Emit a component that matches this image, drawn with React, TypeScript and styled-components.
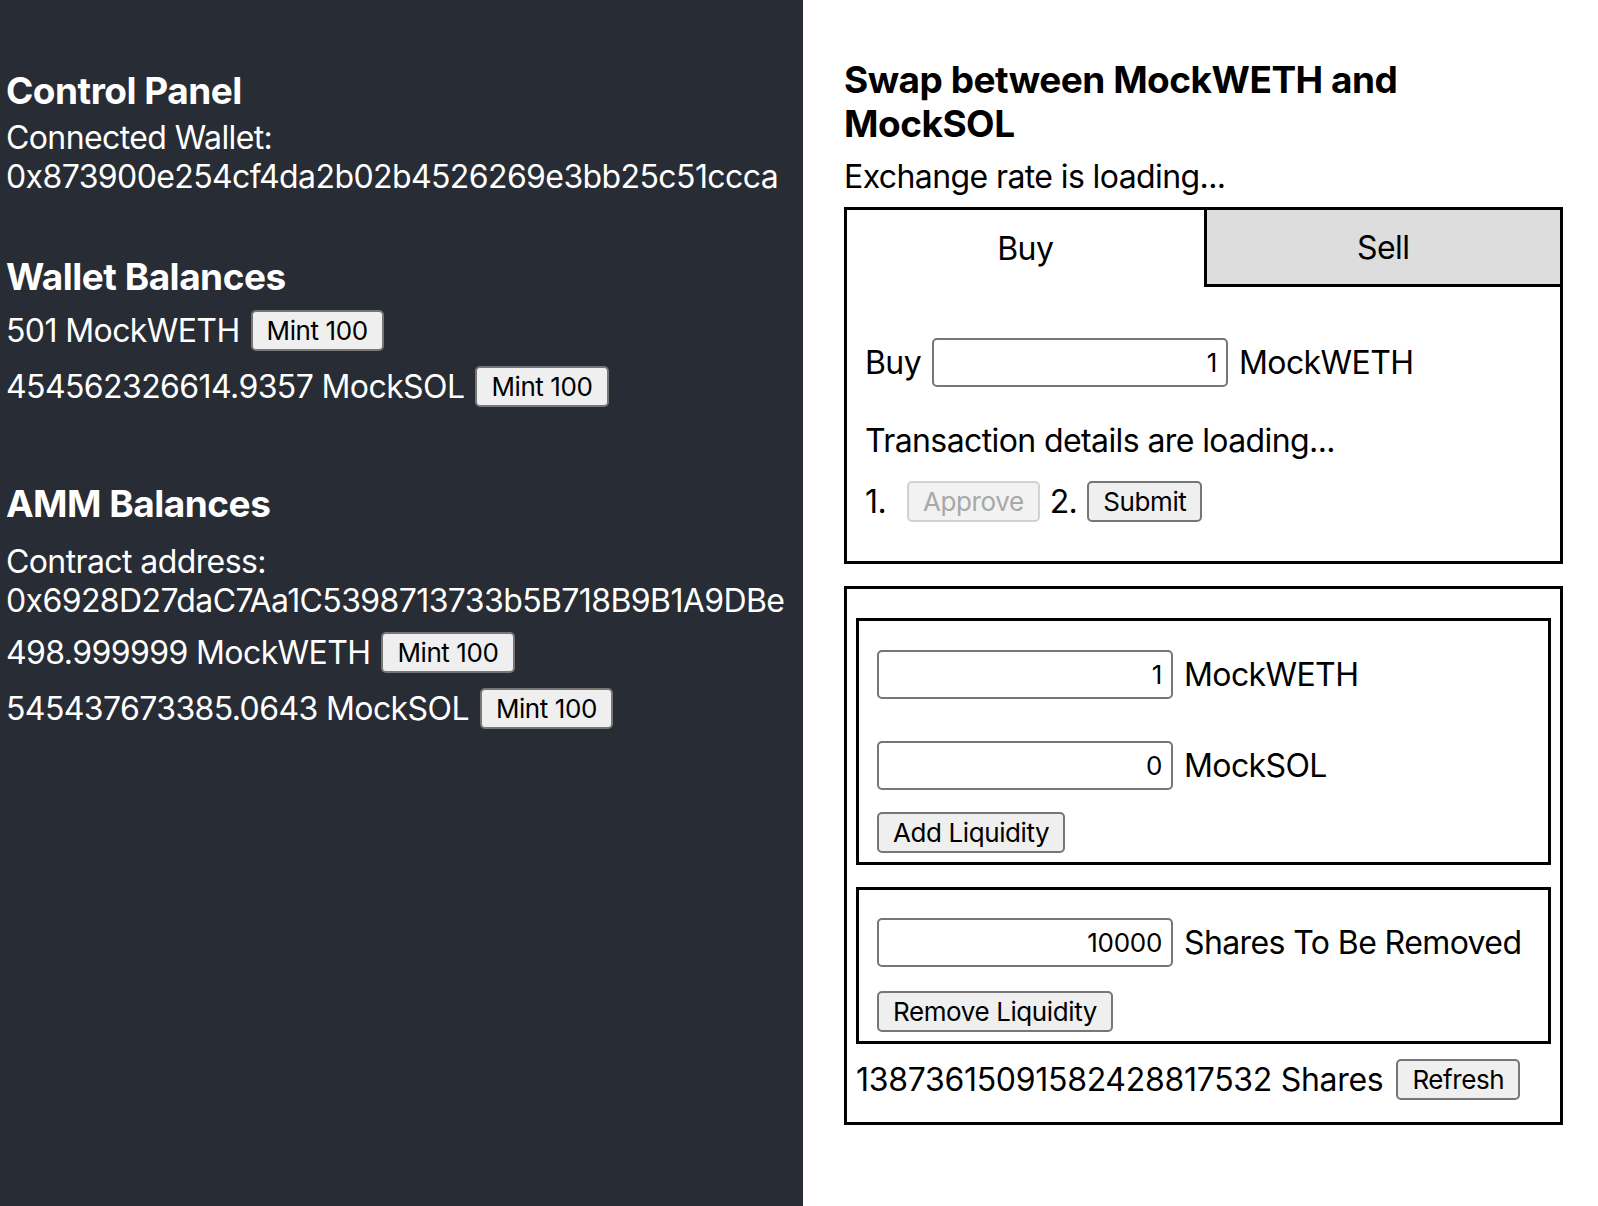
import styled, { createGlobalStyle } from 'styled-components';

const GlobalStyle = createGlobalStyle`
  html, body {
    margin: 0;
    padding: 0;
    background: #ffffff;
  }
  body {
    font-family: Inter, 'Noto Sans', 'Liberation Sans', sans-serif;
  }
`;

const Page = styled.div`
  display: flex;
  width: 1598px;
  min-height: 1206px;
`;

const ControlPanel = styled.div`
  width: 803px;
  flex-shrink: 0;
  background: #282c34;
  color: #ffffff;
  padding: 69px 0 0 6px;
  box-sizing: border-box;
  display: flex;
  flex-direction: column;
`;

const SwapPanel = styled.div`
  flex: 1;
  padding: 58px 35px 0 41px;
  color: #000000;
  display: flex;
  flex-direction: column;
`;

const Heading = styled.h3<{ $gap?: number }>`
  margin: ${p => p.$gap ?? 0}px 0 0;
  font-size: 37px;
  font-weight: 700;
  line-height: 44px;
  letter-spacing: -0.5px;
`;

const Line = styled.div<{ $gap?: number }>`
  margin-top: ${p => p.$gap ?? 0}px;
  font-size: 32px;
  line-height: 39px;
  letter-spacing: -0.6px;
  white-space: nowrap;
`;

const BalanceRow = styled.div<{ $gap?: number }>`
  margin-top: ${p => p.$gap ?? 0}px;
  display: flex;
  align-items: center;
  gap: 11px;
  height: 41px;
  font-size: 32px;
  letter-spacing: -0.6px;
  white-space: nowrap;
`;

const Button = styled.button`
  height: 41px;
  padding: 0 14px;
  font-family: inherit;
  font-size: 26px;
  letter-spacing: -0.4px;
  color: #000000;
  background: #efefef;
  border: 2px solid #767676;
  border-radius: 5px;
  box-sizing: border-box;
  white-space: nowrap;
  cursor: pointer;

  &:disabled {
    color: #a8a8a8;
    background: #f2f2f2;
    border-color: #d2d2d2;
    cursor: default;
  }
`;

const Box = styled.div<{ $gap?: number }>`
  margin-top: ${p => p.$gap ?? 0}px;
  border: 3px solid #000000;
  display: flex;
  flex-direction: column;
`;

const TabBar = styled.div`
  display: grid;
  grid-template-columns: 1fr 1fr;
  height: 77px;
`;

const Tab = styled.div<{ $active: boolean }>`
  display: flex;
  align-items: center;
  justify-content: center;
  font-size: 32px;
  letter-spacing: -0.6px;
  background: ${p => (p.$active ? '#ffffff' : '#dddddd')};
  border-left: ${p => (p.$active ? 'none' : '3px solid #000000')};
  border-bottom: ${p => (p.$active ? 'none' : '3px solid #000000')};
  cursor: pointer;
`;

const SwapBody = styled.div`
  padding: 51px 18px 39px;
  display: flex;
  flex-direction: column;
`;

const FieldRow = styled.div<{ $gap?: number }>`
  margin-top: ${p => p.$gap ?? 0}px;
  display: flex;
  align-items: center;
  gap: 11px;
  font-size: 32px;
  letter-spacing: -0.6px;
  white-space: nowrap;
  height: 49px;
`;

const StepRow = styled.div<{ $gap?: number }>`
  margin-top: ${p => p.$gap ?? 0}px;
  display: flex;
  align-items: center;
  gap: 10px;
  font-size: 32px;
  letter-spacing: -0.6px;
  height: 41px;
`;

const StepNumber = styled.span<{ $width?: number }>`
  min-width: ${p => p.$width ?? 0}px;
`;

const AmountInput = styled.input`
  width: 296px;
  height: 49px;
  box-sizing: border-box;
  border: 2px solid #767676;
  border-radius: 5px;
  padding: 0 9px;
  font-family: inherit;
  font-size: 26px;
  letter-spacing: -0.3px;
  text-align: right;
  color: #000000;
  background: #ffffff;
`;

const LiquidityBox = styled(Box)`
  padding: 29px 9px 22px;
`;

const InnerBox = styled.div<{ $gap?: number; $top: number }>`
  margin-top: ${p => p.$gap ?? 0}px;
  border: 3px solid #000000;
  padding: ${p => p.$top}px 18px 9px;
  display: flex;
  flex-direction: column;
`;

const ButtonRow = styled.div<{ $gap?: number }>`
  margin-top: ${p => p.$gap ?? 0}px;
  display: flex;
`;

const SharesRow = styled.div`
  margin-top: 15px;
  display: flex;
  align-items: center;
  gap: 13px;
  height: 41px;
  font-size: 32px;
  letter-spacing: -0.3px;
  white-space: nowrap;
`;

export default function App() {
  return (
    <Page>
      <GlobalStyle />
      <ControlPanel>
        <Heading>Control Panel</Heading>
        <Line $gap={5}>Connected Wallet:</Line>
        <Line>0x873900e254cf4da2b02b4526269e3bb25c51ccca</Line>

        <Heading $gap={59}>Wallet Balances</Heading>
        <BalanceRow $gap={11}>
          <span>501 MockWETH</span>
          <Button>Mint 100</Button>
        </BalanceRow>
        <BalanceRow $gap={15}>
          <span>454562326614.9357 MockSOL</span>
          <Button>Mint 100</Button>
        </BalanceRow>

        <Heading $gap={75}>AMM Balances</Heading>
        <Line $gap={16}>Contract address:</Line>
        <Line>0x6928D27daC7Aa1C5398713733b5B718B9B1A9DBe</Line>
        <BalanceRow $gap={12}>
          <span>498.999999 MockWETH</span>
          <Button>Mint 100</Button>
        </BalanceRow>
        <BalanceRow $gap={15}>
          <span>545437673385.0643 MockSOL</span>
          <Button>Mint 100</Button>
        </BalanceRow>
      </ControlPanel>

      <SwapPanel>
        <Heading>Swap between MockWETH and MockSOL</Heading>
        <Line $gap={11}>Exchange rate is loading...</Line>

        <Box $gap={11}>
          <TabBar>
            <Tab $active>Buy</Tab>
            <Tab $active={false}>Sell</Tab>
          </TabBar>
          <SwapBody>
            <FieldRow>
              <span>Buy</span>
              <AmountInput defaultValue="1" />
              <span>MockWETH</span>
            </FieldRow>
            <Line $gap={34}>Transaction details are loading...</Line>
            <StepRow $gap={21}>
              <StepNumber $width={32}>1.</StepNumber>
              <Button disabled>Approve</Button>
              <StepNumber>2.</StepNumber>
              <Button>Submit</Button>
            </StepRow>
          </SwapBody>
        </Box>

        <LiquidityBox $gap={22}>
          <InnerBox $top={29}>
            <FieldRow>
              <AmountInput defaultValue="1" />
              <span>MockWETH</span>
            </FieldRow>
            <FieldRow $gap={42}>
              <AmountInput defaultValue="0" />
              <span>MockSOL</span>
            </FieldRow>
            <ButtonRow $gap={22}>
              <Button>Add Liquidity</Button>
            </ButtonRow>
          </InnerBox>
          <InnerBox $gap={22} $top={28}>
            <FieldRow>
              <AmountInput defaultValue="10000" />
              <span>Shares To Be Removed</span>
            </FieldRow>
            <ButtonRow $gap={24}>
              <Button>Remove Liquidity</Button>
            </ButtonRow>
          </InnerBox>
          <SharesRow>
            <span>13873615091582428817532 Shares</span>
            <Button>Refresh</Button>
          </SharesRow>
        </LiquidityBox>
      </SwapPanel>
    </Page>
  );
}
